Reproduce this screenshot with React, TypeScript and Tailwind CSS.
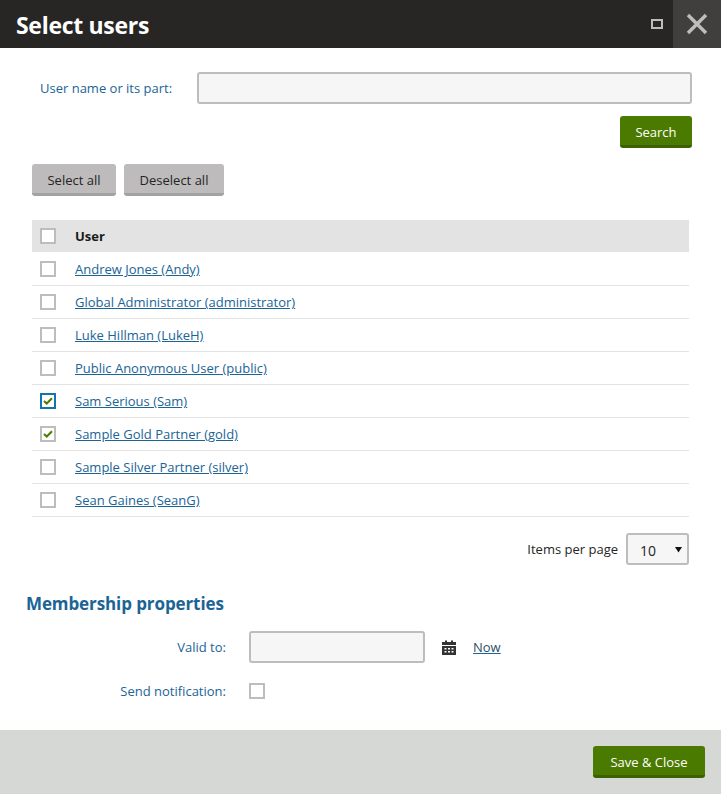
const users: [string, number][] = [
  ["Andrew Jones (Andy)", 0],
  ["Global Administrator (administrator)", 0],
  ["Luke Hillman (LukeH)", 0],
  ["Public Anonymous User (public)", 0],
  ["Sam Serious (Sam)", 2],
  ["Sample Gold Partner (gold)", 1],
  ["Sample Silver Partner (silver)", 0],
  ["Sean Gaines (SeanG)", 0],
];

function Box({ state = 0 }: { state?: number }) {
  return (
    <span className={`flex h-4 w-4 shrink-0 items-center justify-center border-2 bg-white ${state === 2 ? "border-[#1175ae]" : "border-[#bdbdbd]"}`}>
      {state > 0 && (
        <svg width="10" height="8" viewBox="0 0 10 8">
          <path d="M1 4 L3.7 6.5 L9 1.2" fill="none" stroke="#4b7a00" strokeWidth="2" />
        </svg>
      )}
    </span>
  );
}

export default function App() {
  return (
    <div className="flex h-[794px] w-[721px] flex-col overflow-hidden bg-white font-['Open_Sans','Noto_Sans',sans-serif] text-[13px] text-[#262524]">
      <header className="flex h-12 shrink-0 items-center bg-[#272624] pl-4 text-white">
        <h1 className="flex-1 pt-[2px] text-[23px] font-bold tracking-[-0.3px]">Select users</h1>
        <span className="mr-[10px] h-[10px] w-[12px] border-2 border-[#bdbdbd]" />
        <button className="flex h-12 w-12 items-center justify-center bg-[#403f3d]">
          <svg width="22" height="22" viewBox="0 0 22 22">
            <path d="M2 2 L20 20 M20 2 L2 20" stroke="#bdbdbd" strokeWidth="3.4" />
          </svg>
        </button>
      </header>

      <main className="flex-1 pt-6">
        <div className="flex items-center pl-10 pr-[29px]">
          <label className="w-[157px] pt-[2px] text-[#1a6496]">User name or its part:</label>
          <div className="h-8 flex-1 rounded-[3px] border-2 border-[#bdbdbd] bg-[#f6f6f6]" />
        </div>
        <div className="mt-3 flex justify-end pr-[29px]">
          <button className="h-8 w-[72px] rounded-[3px] border-b-[3px] border-[#3d6100] bg-[#4b7a00] pt-1 text-white">Search</button>
        </div>
        <div className="mt-4 flex gap-2 pl-8">
          <button className="h-8 w-[84px] rounded-[3px] border-b-[3px] border-[#a3a2a2] bg-[#bdbbbb] pt-1">Select all</button>
          <button className="h-8 w-[100px] rounded-[3px] border-b-[3px] border-[#a3a2a2] bg-[#bdbbbb] pt-1">Deselect all</button>
        </div>

        <div className="ml-8 mr-8 mt-6">
          <div className="flex h-8 items-center bg-[#e3e3e3] pl-2">
            <Box />
            <span className="ml-[19px] pt-[2px] font-bold text-[#1a1a1a]">User</span>
          </div>
          <div className="pt-px">
            {users.map(([name, state]) => (
              <div key={name} className="flex h-[33px] items-center border-b border-[#e3e3e3] pl-2">
                <Box state={state} />
                <a className="ml-[19px] pt-[2px] text-[#1a6496] underline">{name}</a>
              </div>
            ))}
          </div>
        </div>

        <div className="mt-4 flex items-center justify-end pr-8">
          <span className="pt-[2px]">Items per page</span>
          <div className="relative ml-2 flex h-8 w-[63px] items-center rounded-[3px] border-2 border-[#bdbdbd] bg-[#f6f6f6] pl-3 pt-[2px] text-[14px]">
            10
            <svg className="absolute right-[5px] top-[11px]" width="7" height="7" viewBox="0 0 7 7">
              <path d="M0 1 H7 L3.5 6.5 Z" fill="#111" />
            </svg>
          </div>
        </div>

        <h2 className="mt-[27px] pl-[26px] text-[17px] font-bold leading-[24px] tracking-[-0.1px] text-[#1a6496]">Membership properties</h2>

        <div className="mt-[15px] flex items-center">
          <label className="w-[226px] pt-[2px] text-right text-[#1a6496]">Valid to:</label>
          <div className="ml-[23px] h-8 w-[176px] rounded-[3px] border-2 border-[#bdbdbd] bg-[#f6f6f6]" />
          <svg className="ml-[17px]" width="14" height="15" viewBox="0 0 14 15">
            <path d="M0 2 H3 V0.5 H5 V2 H9 V0.5 H11 V2 H14 V5 H0 Z" fill="#333" />
            <path fillRule="evenodd" d="M0 6 H14 V15 H0 Z M2.5 8 V9.5 H4.5 V8 Z M6 8 V9.5 H8 V8 Z M9.5 8 V9.5 H11.5 V8 Z M2.5 11 V12.5 H4.5 V11 Z M6 11 V12.5 H8 V11 Z M9.5 11 V12.5 H11.5 V11 Z" fill="#333" />
          </svg>
          <a className="ml-[17px] pt-[2px] text-[#2a4f68] underline decoration-[#1a6496]">Now</a>
        </div>
        <div className="mt-[17px] flex items-center">
          <label className="w-[226px] pt-[2px] text-right text-[#1a6496]">Send notification:</label>
          <span className="ml-[23px]"><Box /></span>
        </div>
      </main>

      <footer className="flex h-16 shrink-0 items-center justify-end bg-[#d6d8d5] pr-4">
        <button className="h-8 w-[112px] rounded-[3px] border-b-[3px] border-[#3d6100] bg-[#4b7a00] pt-1 text-white">Save &amp; Close</button>
      </footer>
    </div>
  );
}
